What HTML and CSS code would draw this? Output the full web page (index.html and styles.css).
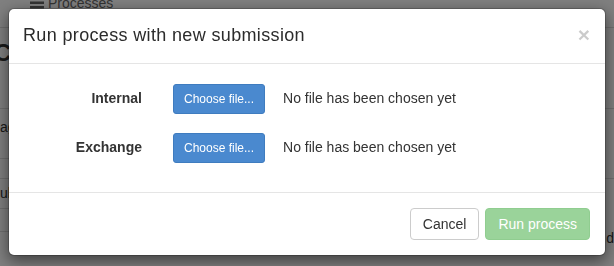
FILE: index.html
```html
<!DOCTYPE html>
<html lang="en">
<head>
    <meta charset="UTF-8">
    <meta name="viewport" content="width=device-width, initial-scale=1.0">
    <title>Run process with new submission</title>
    <link rel="stylesheet" href="styles.css">
</head>
<body>

    <div class="page">
        <div class="nav">
            <span class="nav-link">
                <svg class="nav-icon" width="14" height="12" viewBox="0 0 14 12">
                    <rect x="0" y="0" width="14" height="2.5"/>
                    <rect x="0" y="4.5" width="14" height="2.5"/>
                    <rect x="0" y="9" width="14" height="2.5"/>
                </svg>
                Processes
            </span>
        </div>
        <h2 class="page-title">Co</h2>
        <div class="table">
            <div class="table-row">
                <div class="cell-left">
                    <div class="sub sub-tall">age</div>
                    <div class="sub sub-short"></div>
                </div>
                <div class="cell-right"></div>
            </div>
            <div class="table-row">
                <div class="cell-left">
                    <div class="sub sub-mid">ub</div>
                    <div class="sub sub-low"></div>
                    <div class="sub sub-last"></div>
                </div>
                <div class="cell-right"><span class="cell-end">d</span></div>
            </div>
        </div>
    </div>

    <div class="backdrop"></div>

    <div class="modal">
        <div class="modal-dialog">
            <div class="modal-header">
                <h4 class="modal-title">Run process with new submission</h4>
                <span class="close">&times;</span>
            </div>
            <div class="modal-body">
                <div class="file-row">
                    <label class="file-label">Internal</label>
                    <span class="btn btn-primary btn-sm">Choose file...</span>
                    <span class="file-status">No file has been chosen yet</span>
                </div>
                <div class="file-row">
                    <label class="file-label">Exchange</label>
                    <span class="btn btn-primary btn-sm">Choose file...</span>
                    <span class="file-status">No file has been chosen yet</span>
                </div>
            </div>
            <div class="modal-footer">
                <button class="btn btn-default">Cancel</button>
                <button class="btn btn-success" disabled>Run process</button>
            </div>
        </div>
    </div>

</body>
</html>
```

FILE: styles.css
```css
body {
    margin: 0;
    height: 266px;
    overflow: hidden;
    background-color: #fff;
    color: #333;
    font-family: "Liberation Sans", Arial, sans-serif;
    font-size: 14px;
    line-height: 20px;
}

/* page behind the dialog */
.page {
    display: flex;
    flex-direction: column;
}
.nav {
    height: 34px;
    margin-top: -7px;
    padding-left: 30px;
    border-bottom: 1px solid #ddd;
}
.nav-link {
    display: flex;
    align-items: center;
    gap: 4px;
    color: #666;
    line-height: 20px;
}
.nav-icon {
    fill: #666;
}
.page-title {
    margin: 10px 0 0 -6px;
    font-size: 24px;
    line-height: 30px;
    font-weight: bold;
}
.table {
    margin-top: 40px;
}
.table-row {
    display: flex;
    border-top: 1px solid #ddd;
}
.cell-left {
    width: 200px;
}
.cell-right {
    flex: 1;
    display: flex;
    align-items: flex-end;
    justify-content: flex-end;
}
.cell-end {
    padding: 0 0 12px;
}
.sub {
    border-top: 1px solid #ddd;
}
.sub:first-child {
    border-top: none;
}
.sub-tall {
    height: 49px;
    padding-top: 8px;
    box-sizing: border-box;
}
.sub-short {
    height: 19px;
}
.sub-mid {
    height: 29px;
    padding-top: 4px;
    box-sizing: border-box;
}
.sub-low {
    height: 22px;
}
.sub-last {
    height: 28px;
}

.backdrop {
    position: fixed;
    inset: 0;
    background-color: rgba(0, 0, 0, 0.5);
}

/* dialog */
.modal {
    position: fixed;
    top: 8px;
    left: 8px;
}
.modal-dialog {
    width: 598px;
    box-sizing: border-box;
    background-color: #fff;
    border: 1px solid rgba(0, 0, 0, 0.2);
    border-radius: 6px;
    box-shadow: 0 5px 15px rgba(0, 0, 0, 0.5);
    background-clip: padding-box;
}
.modal-header {
    display: flex;
    justify-content: space-between;
    align-items: flex-start;
    padding: 14px 15px 15px 14px;
    border-bottom: 1px solid #e5e5e5;
}
.modal-title {
    margin: 0;
    font-size: 18px;
    line-height: 25px;
    font-weight: normal;
    letter-spacing: 0.35px;
    color: #2b2b2b;
}
.close {
    margin-top: 1px;
    font-size: 21px;
    font-weight: bold;
    line-height: 1;
    color: #000;
    opacity: 0.2;
}
.modal-body {
    display: flex;
    flex-direction: column;
    gap: 19px;
    padding: 20px 15px 29px;
}
.file-row {
    display: grid;
    grid-template-columns: 118px auto 1fr;
    column-gap: 31px;
    align-items: start;
}
.file-row .file-status {
    margin-left: -13px;
    padding-top: 4px;
}
.file-label {
    padding-top: 4px;
    text-align: right;
    font-weight: bold;
}
.modal-footer {
    display: flex;
    justify-content: flex-end;
    gap: 6px;
    padding: 15px;
    border-top: 1px solid #e5e5e5;
}

/* buttons */
.btn {
    display: inline-block;
    padding: 6px 12px;
    font-family: inherit;
    font-size: 14px;
    line-height: 18px;
    border: 1px solid transparent;
    border-radius: 4px;
    white-space: nowrap;
}
.btn-sm {
    padding: 5px 10px;
    font-size: 12px;
    line-height: 18px;
    border-radius: 3px;
}
.btn-primary {
    color: #fff;
    background-color: #4a89cf;
    border-color: #3f7cbf;
}
.btn-default {
    color: #333;
    background-color: #fff;
    border-color: #ccc;
}
.btn-success {
    color: #fff;
    background-color: #5cb85c;
    border-color: #4cae4c;
    opacity: 0.62;
}
```
